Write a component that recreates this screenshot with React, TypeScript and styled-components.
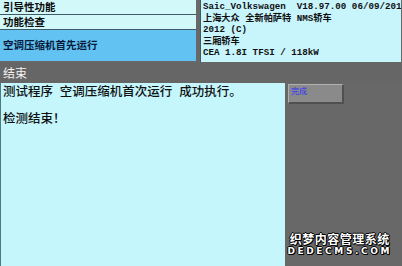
import React from "react";
import styled, { createGlobalStyle } from "styled-components";

const GlobalStyle = createGlobalStyle`
  html, body {
    margin: 0;
    padding: 0;
    background: #686868;
  }
  body {
    width: 402px;
    height: 266px;
    overflow: hidden;
  }
`;

const Screen = styled.div`
  position: relative;
  width: 402px;
  height: 266px;
  display: grid;
  grid-template-rows: 62px 21px 1fr;
  background: #686868;
  font-family: "Noto Sans CJK SC", "Noto Sans", sans-serif;
  overflow: hidden;
`;

const Top = styled.div`
  display: flex;
  gap: 4px;
  padding-right: 6px;
`;

const LeftPanel = styled.div`
  width: 196px;
  display: flex;
  flex-direction: column;
`;

const NavRow = styled.div<{ $active?: boolean; $tall?: boolean }>`
  display: flex;
  align-items: center;
  height: ${(p) => (p.$tall ? "31px" : "14px")};
  padding-left: 3px;
  background: ${(p) => (p.$active ? "#62c2f2" : "#d2f8fa")};
  color: ${(p) => (p.$active ? "#0a1a3a" : "#0c0c0c")};
  border-bottom: ${(p) => (p.$tall ? "0" : "1px solid #3e5a66")};
  font-size: 10.5px;
  font-weight: 700;
  line-height: 1;
  white-space: nowrap;
`;

const InfoPanel = styled.div`
  flex: 1;
  background: #c8f4fc;
  border-left: 1px solid #3e5a66;
  padding: 1px 0 0 2px;
  font-family: "Liberation Mono", "Noto Sans CJK SC", monospace;
  font-size: 9.2px;
  font-weight: 700;
  line-height: 11.5px;
  color: #101010;
  white-space: pre;
  overflow: hidden;
`;

const Bar = styled.div`
  display: flex;
  align-items: center;
  padding-left: 3px;
  color: #f4f4f4;
  font-size: 12px;
  background: #666666;
`;

const Bottom = styled.div`
  display: flex;
`;

const Content = styled.div`
  width: 282px;
  background: #c4f6fc;
  border-left: 1px solid #4a7c84;
  padding: 0 0 0 2px;
  color: #101010;
  font-size: 12.5px;
  font-weight: 500;
`;

const Line = styled.p`
  margin: 0 0 11px 0;
  line-height: 16px;
  white-space: pre;
  word-spacing: 4px;
`;

const Side = styled.div`
  flex: 1;
  padding: 1px 3px;
`;

const ActionButton = styled.button`
  display: flex;
  align-items: flex-start;
  width: 56px;
  height: 20px;
  padding: 1px 2px;
  background: #8a8a8a;
  border-style: solid;
  border-width: 1px 2px 2px 1px;
  border-color: #b0b0b0 #505050 #505050 #b0b0b0;
  color: #3030ff;
  font-family: "Noto Sans CJK SC", sans-serif;
  font-size: 8px;
  line-height: 10px;
  text-align: left;
`;

const Watermark = styled.div`
  position: absolute;
  right: 10px;
  bottom: 10px;
  display: flex;
  flex-direction: column;
  align-items: center;
  gap: 1px;
  color: #ffffff;
  font-weight: 700;
  text-shadow: -1px 0 #000, 1px 0 #000, 0 -1px #000, 0 1px #000, 1px 1px #000;
  pointer-events: none;
`;

const WatermarkTitle = styled.span`
  font-size: 12px;
  line-height: 13px;
  letter-spacing: 0.5px;
`;

const WatermarkUrl = styled.span`
  font-family: "DejaVu Sans", sans-serif;
  font-size: 9px;
  line-height: 10px;
  letter-spacing: 2.6px;
`;

const infoLines = [
  "Saic_Volkswagen  V18.97.00 06/09/201",
  "上海大众 全新帕萨特 NMS轿车",
  "2012 (C)",
  "三厢轿车",
  "CEA 1.8I TFSI / 118kW",
];

export default function App() {
  return (
    <>
      <GlobalStyle />
      <Screen>
        <Top>
          <LeftPanel>
            <NavRow>引导性功能</NavRow>
            <NavRow>功能检查</NavRow>
            <NavRow $active $tall>
              空调压缩机首先运行
            </NavRow>
          </LeftPanel>
          <InfoPanel>
            {infoLines.map((l) => (
              <div key={l}>{l}</div>
            ))}
          </InfoPanel>
        </Top>
        <Bar>结束</Bar>
        <Bottom>
          <Content>
            <Line>测试程序 空调压缩机首次运行 成功执行。</Line>
            <Line>检测结束！</Line>
          </Content>
          <Side>
            <ActionButton>完成</ActionButton>
          </Side>
        </Bottom>
        <Watermark>
          <WatermarkTitle>织梦内容管理系统</WatermarkTitle>
          <WatermarkUrl>DEDECMS.COM</WatermarkUrl>
        </Watermark>
      </Screen>
    </>
  );
}
